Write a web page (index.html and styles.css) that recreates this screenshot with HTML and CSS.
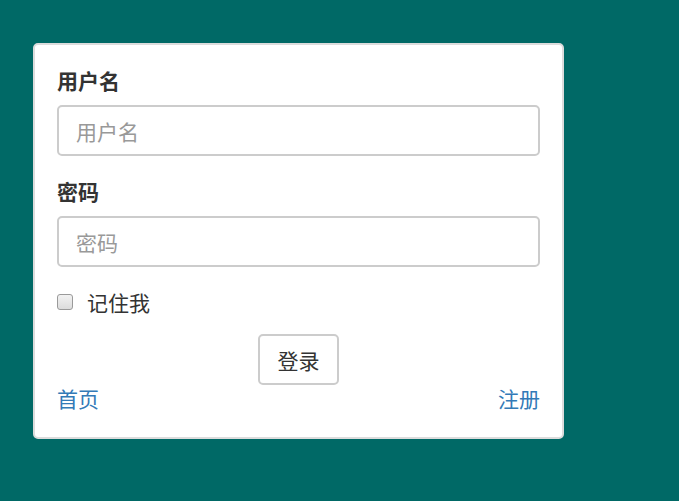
FILE: index.html
```html
<!DOCTYPE html>
<html lang="zh">
<head>
<meta charset="utf-8">
<title>登录</title>
<link rel="stylesheet" href="styles.css">
</head>
<body>
<div class="page">
  <form class="card">
    <div class="group">
      <label class="label" for="u">用户名</label>
      <input class="input" id="u" type="text" placeholder="用户名">
    </div>
    <div class="group">
      <label class="label" for="p">密码</label>
      <input class="input" id="p" type="password" placeholder="密码">
    </div>
    <label class="remember"><span class="box"></span><span>记住我</span></label>
    <div class="actions"><button class="btn" type="button">登录</button></div>
    <div class="links"><a href="#">首页</a><a href="#">注册</a></div>
  </form>
</div>
</body>
</html>
```
FILE: styles.css
```css
html, body {
  margin: 0;
  padding: 0;
  background: #006966;
  font-family: "Noto Sans CJK SC", "Noto Sans", sans-serif;
  font-size: 21px;
  color: #333;
}
.page {
  padding: 43px 0 0 33px;
}
.card {
  box-sizing: border-box;
  width: 531px;
  height: 396px;
  background: #fff;
  border: 2px solid #dcdcdc;
  border-radius: 5px;
  padding: 22px 22px 0 22px;
  display: flex;
  flex-direction: column;
}
.group {
  display: flex;
  flex-direction: column;
  margin-bottom: 22px;
}
.label {
  font-weight: bold;
  line-height: 26px;
  margin-bottom: 12px;
}
.input {
  box-sizing: border-box;
  height: 51px;
  border: 2px solid #ccc;
  border-radius: 5px;
  padding: 0 17px;
  font: inherit;
  color: #333;
  outline: none;
}
.input::placeholder {
  color: #999;
}
.remember {
  display: flex;
  align-items: center;
  line-height: 26px;
  margin-top: 0;
}
.box {
  box-sizing: border-box;
  width: 16px;
  height: 16px;
  border: 1px solid #9a9a9a;
  border-radius: 3px;
  background: linear-gradient(#f2f2f2, #dcdcdc);
  margin-right: 14px;
}
.actions {
  display: flex;
  justify-content: center;
  margin-top: 19px;
}
.btn {
  box-sizing: border-box;
  width: 81px;
  height: 51px;
  background: #fff;
  border: 2px solid #ccc;
  border-radius: 5px;
  font: inherit;
  color: #333;
  padding: 0;
}
.links {
  display: flex;
  justify-content: space-between;
  line-height: 26px;
}
.links a {
  color: #337ab7;
  text-decoration: none;
}
```
